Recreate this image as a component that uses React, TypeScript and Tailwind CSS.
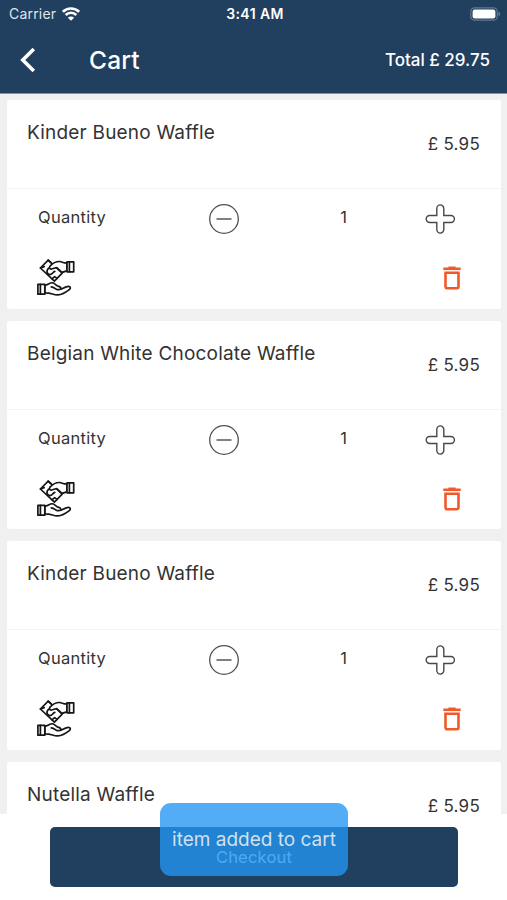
const items = [
  { id: 1, name: 'Kinder Bueno Waffle', price: '5.95', quantity: 1 },
  { id: 2, name: 'Belgian White Chocolate Waffle', price: '5.95', quantity: 1 },
  { id: 3, name: 'Kinder Bueno Waffle', price: '5.95', quantity: 1 },
  { id: 4, name: 'Nutella Waffle', price: '5.95', quantity: 1 },
]

type Item = (typeof items)[number]

const WifiIcon = () => (
  <svg width="18" height="14" viewBox="0 0 18 14" fill="none" stroke="white" strokeWidth="2.6">
    <path d="M0.9 4.8a11.5 11.5 0 0 1 16.2 0" />
    <path d="M3.7 8a7.5 7.5 0 0 1 10.6 0" />
    <path d="M9 13.8 5.9 10.8a4.4 4.4 0 0 1 6.2 0Z" fill="white" stroke="none" />
  </svg>
)

const BatteryIcon = () => (
  <svg width="31" height="14" viewBox="0 0 31 14" fill="none">
    <rect x="0.8" y="0.8" width="26.4" height="12.4" rx="3.8" stroke="#66798f" strokeWidth="1.2" />
    <rect x="2.6" y="2.6" width="22.8" height="8.8" rx="2.2" fill="white" />
    <path d="M28.6 4.8c1.6.6 1.6 3.8 0 4.4Z" fill="#8496a8" />
  </svg>
)

const BackIcon = () => (
  <svg width="16" height="26" viewBox="0 0 16 26" fill="none" stroke="white" strokeWidth="3.6">
    <path d="M13.8 2 2.8 13l11 11" />
  </svg>
)

const MinusIcon = () => (
  <svg width="32" height="32" viewBox="0 0 32 32" fill="none" stroke="#505050" strokeWidth="1.3">
    <circle cx="16" cy="16" r="14.3" />
    <path d="M8.5 16h15" stroke="#6a6a6a" strokeWidth="1.7" />
  </svg>
)

const PlusIcon = () => (
  <svg width="32" height="32" viewBox="0 0 32 32" fill="none" stroke="#484848" strokeWidth="1.4">
    <path d="M12.8 5.4a3.5 3.5 0 0 1 7 0v7.1h7.1a3.5 3.5 0 0 1 0 7h-7.1v7.1a3.5 3.5 0 0 1-7 0v-7.1H5.7a3.5 3.5 0 0 1 0-7h7.1Z" />
  </svg>
)

const TrashIcon = () => (
  <svg width="18" height="24" viewBox="0 0 18 24" fill="none" stroke="#f1592b">
    <path d="M0.3 2.8h17.4" strokeWidth="2.6" />
    <path d="M5.4 1.4h7.2" strokeWidth="1.8" />
    <path d="M2.5 6.7h13v13.9a1.6 1.6 0 0 1-1.6 1.6H4.1a1.6 1.6 0 0 1-1.6-1.6Z" strokeWidth="2.6" />
  </svg>
)

const PayIcon = () => (
  <svg
    width="38"
    height="39"
    viewBox="0 0 38 39"
    fill="white"
    stroke="#161616"
    strokeWidth="1.7"
    strokeLinejoin="round"
    strokeLinecap="round"
  >
    <path d="M3.4 10 11.2 2.2l14 13-7.8 8Z" />
    <path d="M3.4 10 7.2 8.6M11.2 2.2l2.6 2.4M15 20.8l2.6-2.2 2.4 1.8" />
    <path d="M12.6 9.8c-3.6 1.6-3.4 6.4.2 6.8 2.6.2 2.4-2.4 5-3.2" />
    <path d="M30 4.8h-3l-4.2-1.3c-4.3-.2-6.6 1.2-9.8 4.6-1.4 2 .4 3.6 2.4 2.7l4.4-1.3 4.6 4.4c1.5 1 3.2-.8 5.6-1.1Z" />
    <path d="M30 3.8h6.7v10H30Z" />
    <path d="M32.4 3.8v10" />
    <path d="M7.8 27.2c3.5-.2 4.4-2.8 8-2.4 2.4.7 3.6 3.2 6.1 3.6 1.7.6 2.2 1.4 1.9 2.8l5.4-2.3c3.4-1.4 5.2.4 3.4 2.5-3.2 2.6-7.2 5.3-11.8 5.5-5 .2-6-2.3-13-2.1Z" />
    <path d="M14.3 28.8c3.2.4 3.8 2.4 6 2.8 1.4.2 2.6.2 3.4-.5" />
    <path d="M0.9 26.3h6.9v9.9H0.9Z" />
    <path d="M3.4 26.3v9.9" />
  </svg>
)

const CartItem = ({ item }: { item: Item }) => {
  return (
    <article className="h-[208.6px] shrink-0 rounded-xs bg-white">
      <div className="flex h-[89px] justify-between border-b border-[#f3f3f3] pr-[21px] pl-5">
        <h2 className="pt-[19px] text-[19px] leading-[27px] tracking-[0.2px]">{item.name}</h2>
        <p className="pt-8 text-[17px] leading-6 tracking-[0.25px]">£ {item.price}</p>
      </div>
      <div className="flex h-[60px] pl-[31px]">
        <span className="w-[170px] pt-4 text-[16.5px] leading-6 tracking-[0.3px]">Quantity</span>
        <button className="mt-[14px] size-8"><MinusIcon /></button>
        <span className="ml-[77px] w-[30px] pt-4 text-right text-[16.5px] leading-6">{item.quantity}</span>
        <button className="mt-[14px] ml-[77px] size-8"><PlusIcon /></button>
      </div>
      <div className="flex justify-between pr-10 pl-[30px]">
        <button className="mt-[9px]"><PayIcon /></button>
        <button className="mt-[17px] h-6"><TrashIcon /></button>
      </div>
    </article>
  )
}

const App = () => {
  return (
    <div className="relative flex h-[900px] w-[507px] flex-col overflow-hidden bg-[#f0f0f0] font-['Inter',sans-serif] text-[#333333]">
      <header className="h-[94px] shrink-0 border-b border-[#8192a4] bg-[#213f5e] text-white">
        <div className="grid h-[27px] grid-cols-3 items-center pr-[6px] pl-[9px] text-[14px]">
          <div className="flex items-center gap-[6px] text-[#dfe6ec]">
            <span className="tracking-[0.2px]">Carrier</span>
            <WifiIcon />
          </div>
          <span className="text-center font-semibold tracking-[0.4px]">3:41 AM</span>
          <div className="flex justify-end"><BatteryIcon /></div>
        </div>
        <div className="flex h-[65px] items-center pr-[17px] pl-5">
          <button><BackIcon /></button>
          <h1 className="ml-[53px] pt-px text-[24.5px] font-medium tracking-[0.2px]">Cart</h1>
          <span className="ml-auto pt-[2px] text-[17px] font-medium">Total £ 29.75</span>
        </div>
      </header>
      <main className="flex min-h-0 flex-1 flex-col gap-3 overflow-hidden pt-[6px] pr-[6px] pl-[7px]">
        {items.map((item) => (
          <CartItem key={item.id} item={item} />
        ))}
      </main>
      <footer className="h-[86px] shrink-0 bg-white px-[50px] pt-[13px]">
        <button className="h-[60px] w-[408px] rounded-[5px] bg-[#213f5e] text-[16.5px] tracking-[0.2px] text-[#e4eefa]">
          Checkout
        </button>
      </footer>
      <div className="absolute top-[803px] left-[160px] flex h-[73px] w-[188px] items-center justify-center rounded-[11px] bg-[#2196f3]/78 pt-px text-[19px] text-[#d3e0ec]">
        item added to cart
      </div>
    </div>
  )
}

export default App
